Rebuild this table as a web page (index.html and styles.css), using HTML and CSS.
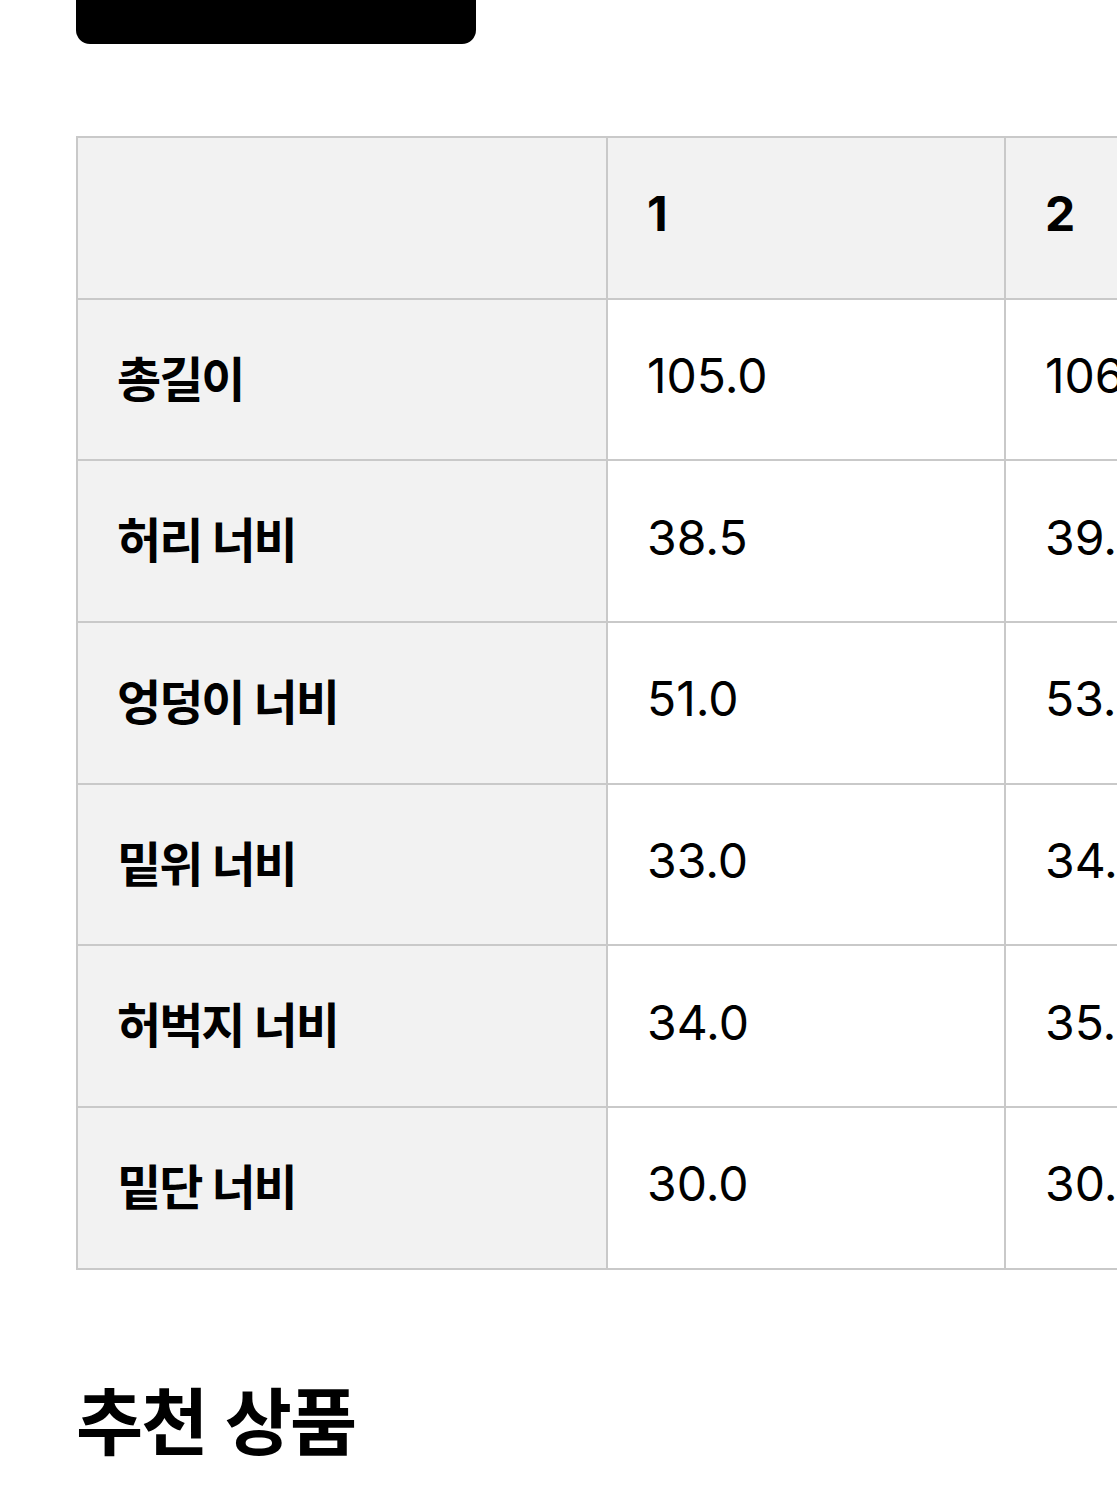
FILE: index.html
```html
<!DOCTYPE html>
<html lang="ko">
<head>
<meta charset="utf-8">
<link rel="stylesheet" href="styles.css">
</head>
<body>
<div class="page">
  <div class="top-bar"></div>
  <div class="table-wrap">
    <table class="size-table">
      <thead>
        <tr>
          <th class="label"></th>
          <th>1</th>
          <th>2</th>
        </tr>
      </thead>
      <tbody>
        <tr><th class="label">총길이</th><td>105.0</td><td>106.0</td></tr>
        <tr><th class="label">허리 너비</th><td>38.5</td><td>39.5</td></tr>
        <tr><th class="label">엉덩이 너비</th><td>51.0</td><td>53.0</td></tr>
        <tr><th class="label">밑위 너비</th><td>33.0</td><td>34.0</td></tr>
        <tr><th class="label">허벅지 너비</th><td>34.0</td><td>35.0</td></tr>
        <tr><th class="label">밑단 너비</th><td>30.0</td><td>30.5</td></tr>
      </tbody>
    </table>
  </div>
  <h2 class="section-title">추천 상품</h2>
</div>
</body>
</html>
```

FILE: styles.css
```css
html, body {
  margin: 0;
  padding: 0;
  background: #ffffff;
}
body {
  font-family: Inter, "Noto Sans CJK KR", sans-serif;
  color: #000;
  overflow: hidden;
}
.page {
  padding-left: 76px;
  width: 1041px;
  overflow: hidden;
}
.top-bar {
  width: 400px;
  height: 44px;
  background: #000;
  border-radius: 0 0 14px 14px;
}
.table-wrap {
  margin-top: 92px;
  width: 1041px;
  overflow: hidden;
}
.size-table {
  border-collapse: collapse;
  table-layout: fixed;
  width: 1326px;
}
.size-table th,
.size-table td {
  height: 161.7px;
  padding: 0 0 8px 39px;
  text-align: left;
  vertical-align: middle;
  border: 2px solid #c9c9c9;
  font-size: 48px;
  box-sizing: border-box;
}
.size-table th {
  font-weight: 700;
}
.size-table td {
  font-weight: 400;
  background: #fff;
}
.size-table thead th {
  background: #f2f2f2;
}
.size-table .label {
  width: 530px;
  background: #f2f2f2;
  font-weight: 600;
  letter-spacing: -2px;
}
.size-table th:not(.label),
.size-table td {
  width: 398px;
}
.section-title {
  margin: 104px 0 0 0;
  font-family: "Noto Sans CJK KR", sans-serif;
  font-size: 73px;
  font-weight: 700;
  line-height: 1.2;
  letter-spacing: -2px;
}
```
